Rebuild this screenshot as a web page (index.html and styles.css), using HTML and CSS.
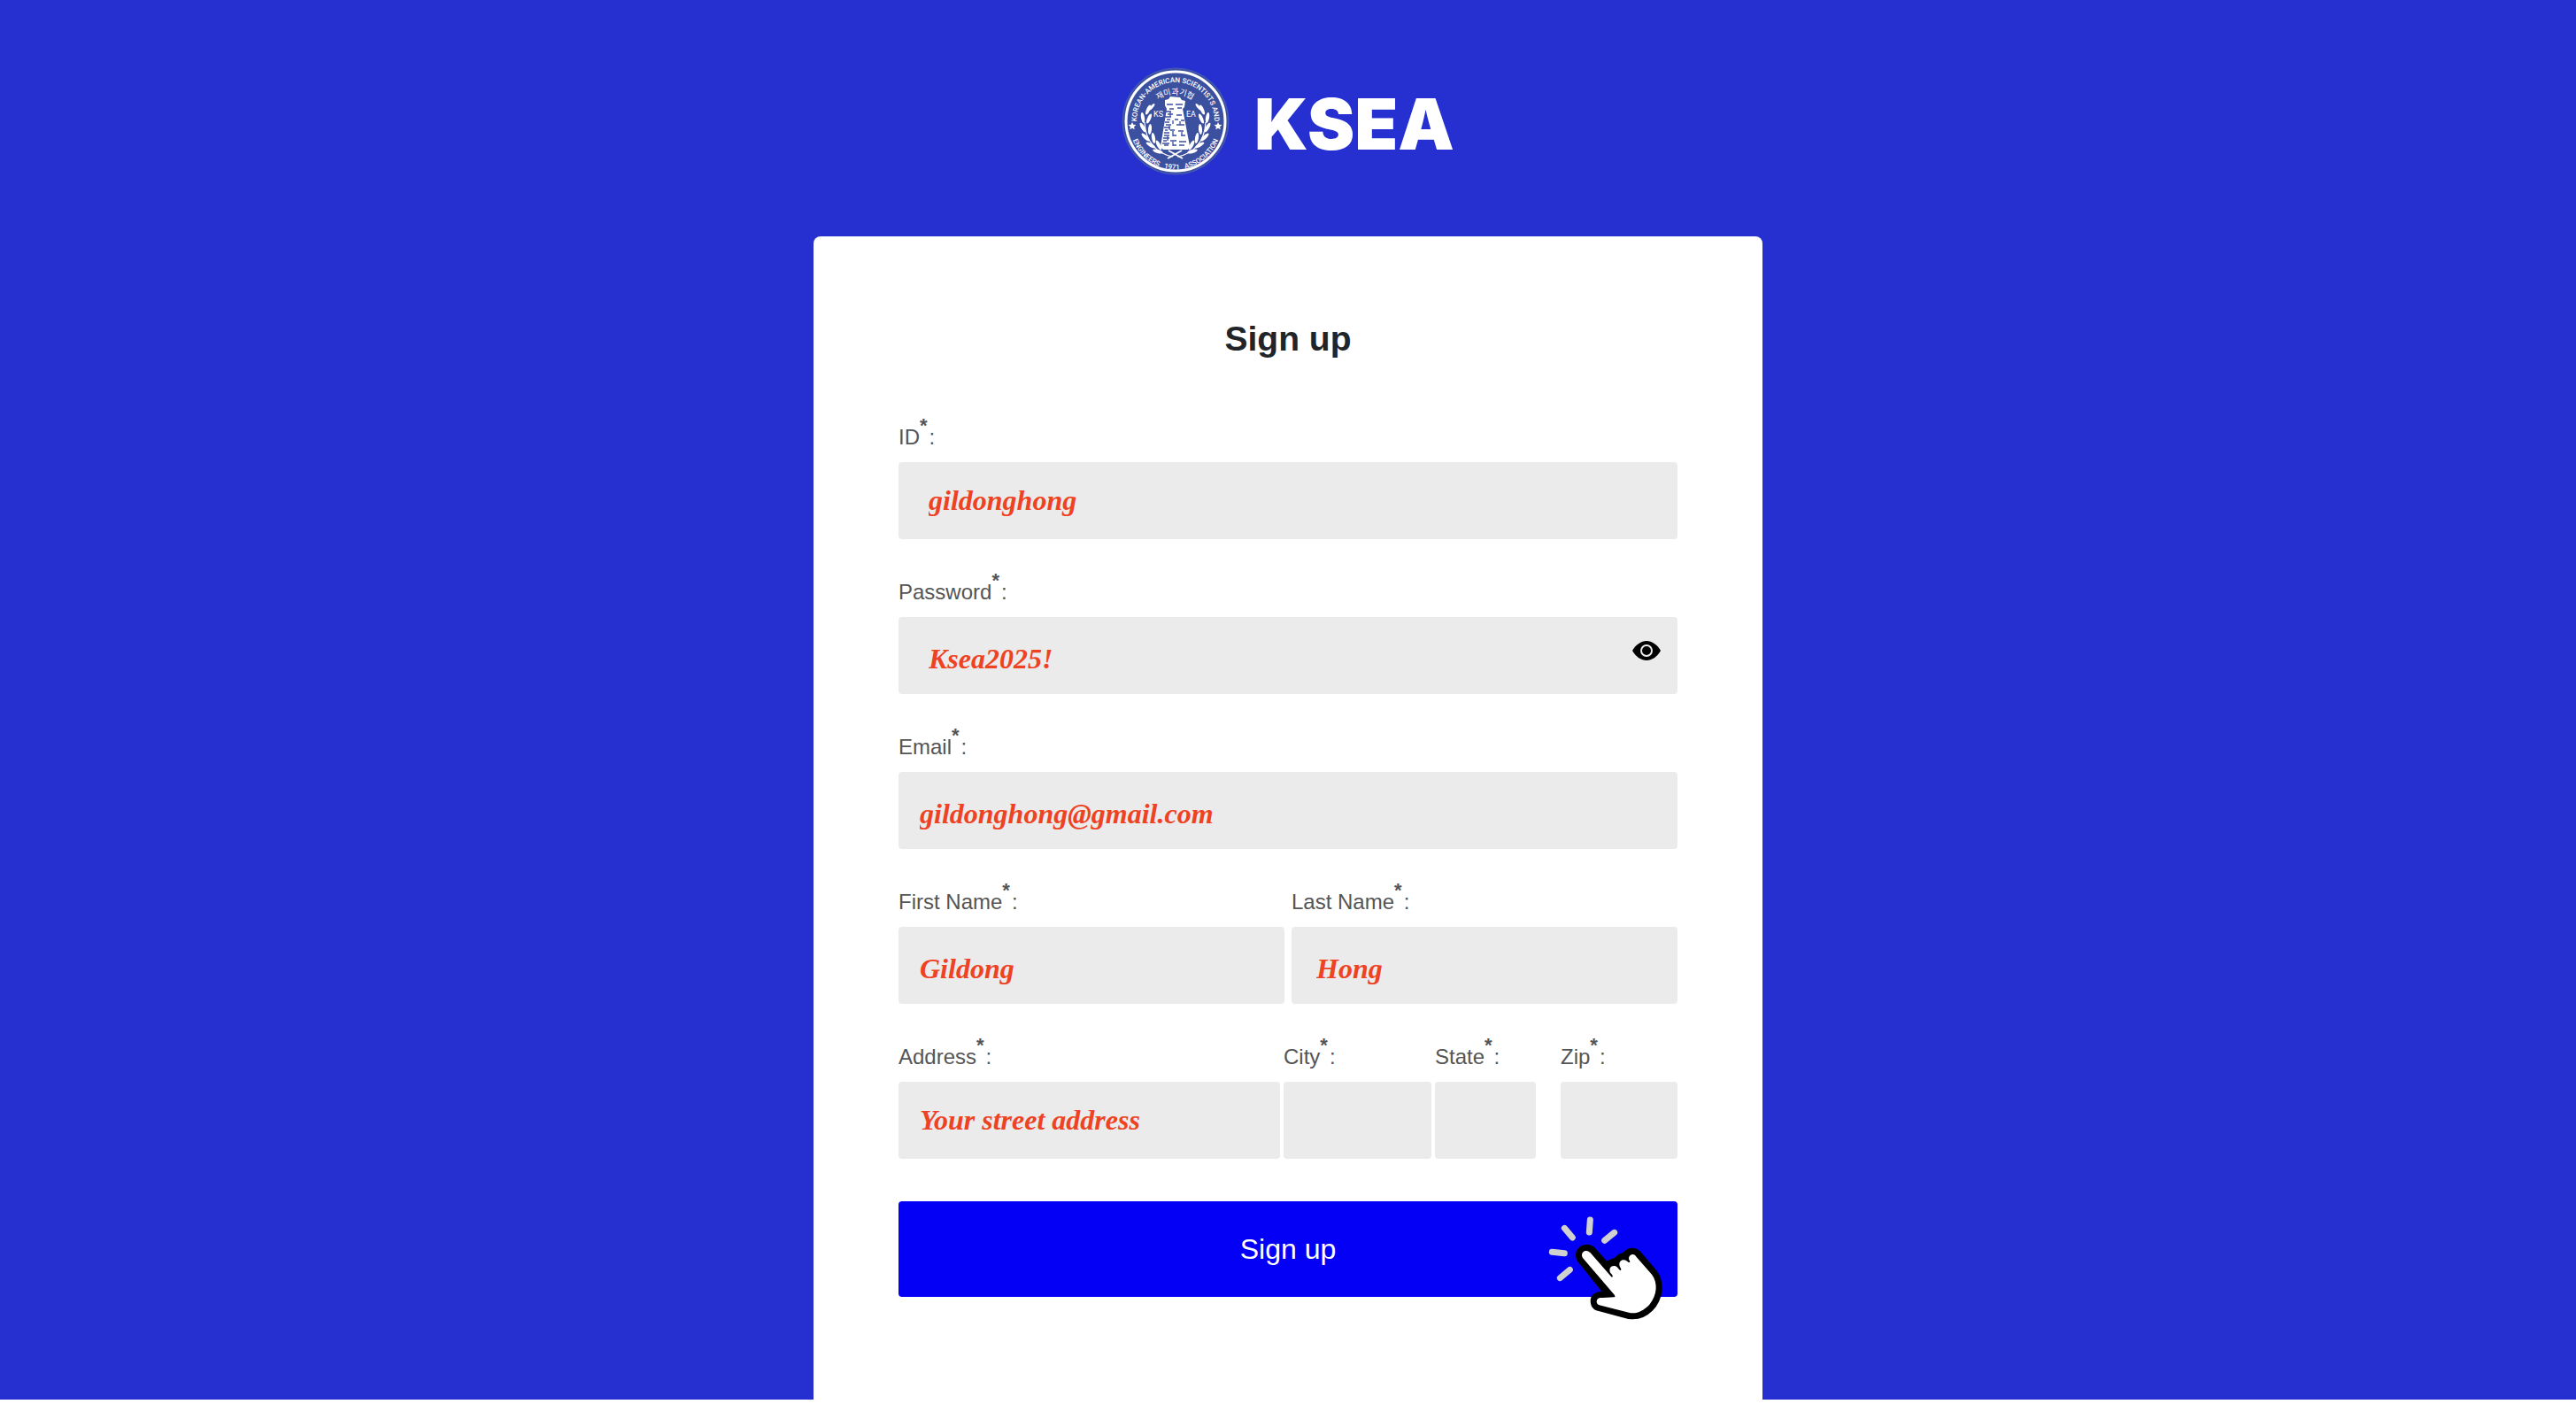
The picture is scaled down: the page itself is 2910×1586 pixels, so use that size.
FILE: index.html
```html
<!DOCTYPE html>
<html lang="en">
<head>
  <meta charset="utf-8">
  <meta name="viewport" content="width=device-width, initial-scale=1">
  <title>KSEA – Sign up</title>
  <link rel="stylesheet" href="styles.css">
</head>
<body>
  <div class="page">
    <header class="brand">
      <svg class="seal" viewBox="0 0 122 122" aria-hidden="true">
        <defs>
          <path id="arc-top" d="M20 77 A44 44 0 1 1 102 77"/>
          <path id="arc-bottom" d="M9.500 64 A51.500 51.500 0 0 0 112.500 64"/>
          <path id="arc-name" d="M36 41 Q60.500 20 85 41"/>
          <g id="laurel">
            <path d="M58 101 C40 98 27 84 26 62" fill="none" stroke="#fff" stroke-width="1.200"/>
            <g fill="#fff">
              <ellipse cx="30" cy="48" rx="2" ry="6" transform="rotate(24 30 48)"/>
              <ellipse cx="34" cy="45" rx="1.500" ry="5" transform="rotate(40 34 45)"/>
              <ellipse cx="24" cy="57" rx="2" ry="6" transform="rotate(-10 24 57)"/>
              <ellipse cx="31" cy="58" rx="2" ry="6" transform="rotate(24 31 58)"/>
              <ellipse cx="24" cy="68" rx="2" ry="6" transform="rotate(-30 24 68)"/>
              <ellipse cx="32" cy="70" rx="2" ry="6" transform="rotate(5 32 70)"/>
              <ellipse cx="27" cy="79" rx="2" ry="6" transform="rotate(-46 27 79)"/>
              <ellipse cx="36" cy="80" rx="2" ry="6" transform="rotate(-10 36 80)"/>
              <ellipse cx="33" cy="88" rx="2" ry="6" transform="rotate(-60 33 88)"/>
              <ellipse cx="42" cy="88" rx="2" ry="6" transform="rotate(-28 42 88)"/>
              <ellipse cx="41" cy="95" rx="2" ry="6" transform="rotate(-74 41 95)"/>
            </g>
            <path d="M68 94 L52 103" stroke="#fff" stroke-width="2"/>
          </g>
        </defs>
        <circle cx="61" cy="61" r="60" fill="#3c50a0" stroke="#4a5cb8" stroke-width="1"/>
        <circle cx="61" cy="61" r="56" fill="none" stroke="#fff" stroke-width="3"/>
        <use href="#laurel"/>
        <use href="#laurel" transform="translate(121 0) scale(-1 1)"/>
        <path d="M49 37 L53 36 L55 33 L66 34 L68 37 L72 38 L71 45 L69 47 L77 89 L75 93 H47 L44 90 L51 47 L49 43 Z" fill="#fff"/>
        <path d="M51 42h7m3 0h8M54 47h5m4-1h5M52 53h6m4 1h6M51 59h4m5 0h4m3 1h4M50 65h6m6 0h9M49 71h3m3 0h5m4 1h6M48 77h6m4 0h4m5 0h5M47 83h4m4 0h7m3 1h8M48 88h5m5 0h4m3 0h6M50 50h6M49 56h7M49 62h5M48 68h7M48 74h6M47 80h7M46 86h8M55 50v6M58 60v4M54 66v5M58 72v6M52 78v5M58 84v5M66 61v4M68 73v4" fill="none" stroke="#3c50a0" stroke-width="1.300"/>
        <path id="star" d="M12 62l1.300 2.700 3 .4-2.200 2.100.6 3-2.700-1.500-2.700 1.500.6-3-2.200-2.100 3-.4z" fill="#fff"/>
        <use href="#star" x="97"/>
        <g class="seal-text">
          <text class="seal-ring"><textPath href="#arc-top" startOffset="50%" text-anchor="middle">KOREAN-AMERICAN SCIENTISTS AND</textPath></text>
          <text class="seal-ring"><textPath href="#arc-bottom" startOffset="50%" text-anchor="middle">ENGINEERS &#160; 1971 &#160; ASSOCIATION</textPath></text>
          <text class="seal-name"><textPath href="#arc-name" startOffset="50%" text-anchor="middle">재미과기협</textPath></text>
          <text class="seal-mid" x="36" y="56">KS</text>
          <text class="seal-mid" x="73" y="56">EA</text>
        </g>
      </svg>
      <span class="brand-name">KSEA</span>
    </header>

    <main class="card">
      <h1 class="title">Sign up</h1>
      <form class="form">
        <div class="field">
          <label for="id">ID<sup>*</sup>:</label>
          <input class="inset" id="id" type="text" value="gildonghong">
        </div>
        <div class="field">
          <label for="password">Password<sup>*</sup>:</label>
          <div class="password">
            <input class="inset low" id="password" type="text" value="Ksea2025!">
            <button class="reveal" type="button" aria-label="Hide password">
              <svg viewBox="0 0 32 22" width="32" height="22" aria-hidden="true">
                <path d="M0 11 C4 4 10 0 16 0 S28 4 32 11 C28 18 22 22 16 22 S4 18 0 11Z"/>
                <circle cx="16" cy="11" r="6" fill="none" stroke="#ebebeb" stroke-width="2"/>
              </svg>
            </button>
          </div>
        </div>
        <div class="field">
          <label for="email">Email<sup>*</sup>:</label>
          <input class="low" id="email" type="email" value="gildonghong@gmail.com">
        </div>
        <div class="row names">
          <div class="field">
            <label for="first">First Name<sup>*</sup>:</label>
            <input class="low" id="first" type="text" value="Gildong">
          </div>
          <div class="field">
            <label for="last">Last Name<sup>*</sup>:</label>
            <input class="low last" id="last" type="text" value="Hong">
          </div>
        </div>
        <div class="row place">
          <div class="field">
            <label for="address">Address<sup>*</sup>:</label>
            <input id="address" type="text" value="Your street address">
          </div>
          <div class="field">
            <label for="city">City<sup>*</sup>:</label>
            <input id="city" type="text">
          </div>
          <div class="field state">
            <label for="state">State<sup>*</sup>:</label>
            <input id="state" type="text">
          </div>
          <div class="field">
            <label for="zip">Zip<sup>*</sup>:</label>
            <input id="zip" type="text">
          </div>
        </div>
        <div class="action">
          <button class="submit" type="submit">Sign up</button>
          <svg class="pointer" viewBox="0 0 390 360" aria-hidden="true">
            <path d="M199 114 L196 156M112 142 L139 174M70 223 L112 227M97 311 L130 283M248 184 L281 157" stroke="#d0d0d0" stroke-width="21" stroke-linecap="round"/>
            <path d="M163 250 C152 233 160 212 178 207 C190 203 203 207 211 216 L256 266 C266 254 278 252 286 252 C294 238 306 234 315 233 C328 214 348 213 362 225 L416 289 C446 326 439 381 405 416 C380 441 357 446 330 442 L224 414 C206 407 202 380 218 370 C226 363 236 364 256 366 Z" fill="#000" stroke="#000" stroke-width="16" stroke-linejoin="round"/>
            <path d="M174 243 C168 233 172 223 180 220 C188 217 195 220 200 226 L272 308 C278 308 276 302 268 294 C262 284 266 272 276 271 C284 268 290 272 297 282 C303 288 307 284 301 275 C294 262 300 252 310 250 C318 248 322 252 328 257 C334 260 336 256 331 250 C328 240 334 232 342 231 C348 230 352 234 356 240 L408 299 C428 326 428 366 400 401 C378 424 354 434 330 428 L230 403 C221 400 219 390 223 384 C226 378 233 377 242 378 L280 376 C285 376 284 372 280 367 Z" fill="#fff"/>
          </svg>
        </div>
      </form>
    </main>
  </div>
</body>
</html>
```
FILE: styles.css
```css
* {
  box-sizing: border-box;
}

body {
  margin: 0;
  background: #fff;
  color: #212529;
  font-family: "Liberation Sans", Arial, sans-serif;
}

.page {
  display: flex;
  flex-direction: column;
  align-items: center;
  padding-top: 76px;
  margin-bottom: 4px;
  background: #2630d0;
}

.brand {
  display: flex;
  align-items: center;
  gap: 28px;
  margin-bottom: 69px;
}

.seal {
  width: 122px;
  height: 122px;
  overflow: visible;
}

.seal-text {
  fill: #fff;
  font-family: Roboto, "Noto Sans", sans-serif;
}

.seal-ring {
  font-size: 8px;
  font-weight: 500;
}

.seal-name {
  font-family: "Noto Sans CJK KR", sans-serif;
  font-size: 9px;
}

.seal-mid {
  font-size: 9px;
}

.brand-name {
  padding-top: 6px;
  color: #fff;
  font-family: Inter, "Liberation Sans", sans-serif;
  font-size: 80px;
  font-weight: 900;
  line-height: 80px;
}

.card {
  width: 100%;
  max-width: 1072px;
  padding: 90px 96px 116px;
  border-radius: 8px 8px 0 0;
  background: #fff;
}

.title {
  margin: 0 0 73px;
  font-size: 39px;
  line-height: 52px;
  text-align: center;
}

.form,
.field {
  display: flex;
  flex-direction: column;
}

.form {
  gap: 48px;
}

.field {
  min-width: 0;
}

label {
  height: 44px;
  margin-top: -4px;
  color: #555;
  font-size: 24px;
  line-height: 32px;
  white-space: nowrap;
}

sup {
  position: relative;
  top: -14px;
  margin-right: 2px;
  font-size: 22px;
  font-weight: 700;
  line-height: 0;
  vertical-align: baseline;
}

input {
  width: 100%;
  height: 87px;
  padding: 0 24px;
  border: 0;
  border-radius: 4px;
  background: #ebebeb;
  color: #ee4223;
  font-family: "Liberation Serif", "Times New Roman", serif;
  font-size: 32px;
  font-style: italic;
  font-weight: 700;
}

.inset {
  padding-left: 34px;
}

.low {
  padding-top: 8px;
}

.last {
  padding-left: 28px;
}

.password {
  position: relative;
}

.reveal {
  position: absolute;
  top: 27px;
  right: 19px;
  display: flex;
  padding: 0;
  border: 0;
  background: none;
}

.row {
  display: grid;
}

.names {
  grid-template-columns: 1fr 1fr;
  gap: 8px;
}

.place {
  grid-template-columns: 431fr 167fr 138fr 132fr;
  gap: 4px;
}

.state {
  padding-right: 24px;
}

.action {
  position: relative;
}

.submit {
  display: block;
  width: 100%;
  height: 108px;
  border: 0;
  border-radius: 4px;
  background: #0400f5;
  color: #fff;
  font-family: inherit;
  font-size: 32px;
}

.pointer {
  position: absolute;
  top: -17px;
  right: 35px;
  width: 130px;
  height: 120px;
  overflow: visible;
  pointer-events: none;
}
```
